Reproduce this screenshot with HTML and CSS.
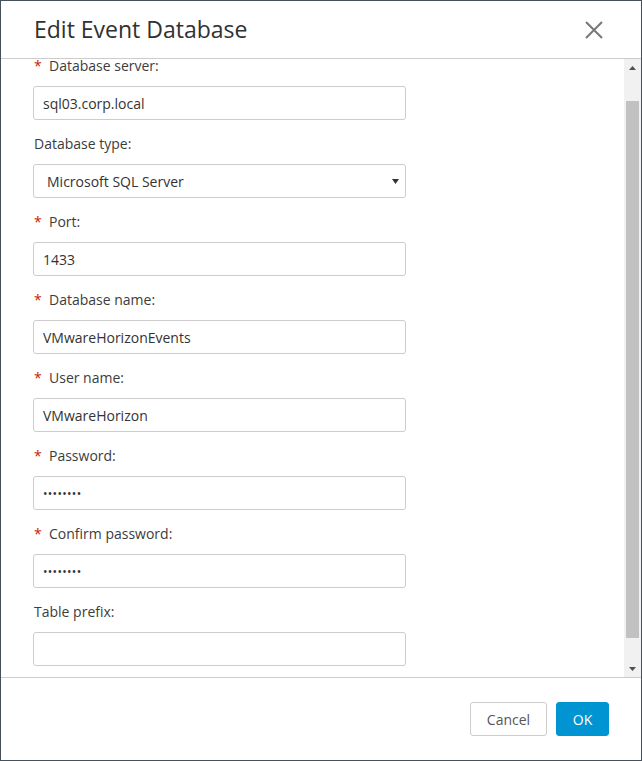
FILE: index.html
```html
<!DOCTYPE html>
<html lang="en">

<head>
  <meta charset="UTF-8">
  <meta name="viewport" content="width=device-width, initial-scale=1.0">
  <title>Edit Event Database</title>
  <link rel="stylesheet" href="styles.css">
</head>

<body>
  <div class="dialog">
    <!-- header -->
    <div class="header">
      <h1 class="title">Edit Event Database</h1>
      <span class="close">
        <svg width="18" height="18" viewBox="0 0 18 18">
          <path d="M1 1 L17 17 M17 1 L1 17" stroke="#777" stroke-width="2" fill="none" />
        </svg>
      </span>
    </div>

    <!-- scrolling body -->
    <div class="body">
      <div class="content">
        <div class="field first">
          <label class="required">Database server:</label>
          <input class="input" type="text" value="sql03.corp.local">
        </div>
        <div class="field">
          <label>Database type:</label>
          <div class="select">
            <span>Microsoft SQL Server</span>
            <svg width="7" height="5" viewBox="0 0 7 5"><path d="M0 0 H7 L3.5 5 Z" fill="#333" /></svg>
          </div>
        </div>
        <div class="field">
          <label class="required">Port:</label>
          <input class="input" type="text" value="1433">
        </div>
        <div class="field">
          <label class="required">Database name:</label>
          <input class="input" type="text" value="VMwareHorizonEvents">
        </div>
        <div class="field">
          <label class="required">User name:</label>
          <input class="input" type="text" value="VMwareHorizon">
        </div>
        <div class="field">
          <label class="required">Password:</label>
          <input class="input pass" type="text" value="••••••••">
        </div>
        <div class="field">
          <label class="required">Confirm password:</label>
          <input class="input pass" type="text" value="••••••••">
        </div>
        <div class="field">
          <label>Table prefix:</label>
          <input class="input" type="text" value="">
        </div>
      </div>
      <div class="scrollbar">
        <div class="arrow up"><svg width="7" height="4" viewBox="0 0 7 4"><path d="M0 4 H7 L3.5 0 Z" fill="#505050" /></svg></div>
        <div class="track"><div class="thumb"></div></div>
        <div class="arrow down"><svg width="7" height="4" viewBox="0 0 7 4"><path d="M0 0 H7 L3.5 4 Z" fill="#505050" /></svg></div>
      </div>
    </div>

    <!-- footer -->
    <div class="footer">
      <button class="btn">Cancel</button>
      <button class="btn primary">OK</button>
    </div>
  </div>
</body>

</html>
```

FILE: styles.css
```css
* {
  margin: 0;
  padding: 0;
  box-sizing: border-box
}

body {
  font-family: "Open Sans", "Liberation Sans", sans-serif;
  color: #333;
  background: #fff;
}

.dialog {
  width: 642px;
  height: 761px;
  border: 1px solid #47515b;
  display: flex;
  flex-direction: column;
  background-color: #fff;
}

.header {
  height: 58px;
  border-bottom: 1px solid #ccc;
  display: flex;
  align-items: center;
  justify-content: space-between;
  padding: 0 38px 0 33px;
}

.title {
  font-size: 23px;
  font-weight: 400;
  color: #313131;
  margin-top: -2px;
}

.close {
  display: flex;
  margin-top: 1px;
}

.body {
  flex: 1;
  display: flex;
  overflow: hidden;
}

.content {
  flex: 1;
  padding-left: 32px;
  overflow: hidden;
}

.field {
  margin-top: 14px;
}

.field.first {
  margin-top: -3px;
}

.field label {
  display: block;
  height: 20px;
  line-height: 20px;
  font-size: 14px;
  color: #3c3c3c;
  padding-left: 1px;
  margin-bottom: 10px;
}

.field label.required {
  position: relative;
  padding-left: 16px;
}

.field label.required::before {
  content: "*";
  position: absolute;
  left: 1px;
  top: 0;
  color: #c92100;
  font-size: 14px;
}

.input,
.select {
  display: block;
  width: 373px;
  height: 34px;
  border: 1px solid #ccc;
  border-radius: 3px;
  font-family: "Open Sans", "Liberation Sans", sans-serif;
  font-size: 14px;
  color: #333;
  padding: 0 9px;
  outline: none;
  background: #fff;
}

.input.pass {
  font-size: 12px;
  letter-spacing: 0.3px;
  padding-left: 9px;
}

.select {
  display: flex;
  align-items: center;
  justify-content: space-between;
  padding: 0 6px 0 13px;
}

.scrollbar {
  width: 17px;
  background-color: #f1f1f1;
  display: flex;
  flex-direction: column;
}

.arrow {
  height: 17px;
  display: flex;
  align-items: center;
  justify-content: center;
}

.track {
  flex: 1;
  padding: 25px 2px 22px 2px;
}

.thumb {
  height: 100%;
  background-color: #c1c1c1;
}

.footer {
  height: 83px;
  border-top: 1px solid #ccc;
  display: flex;
  justify-content: flex-end;
  align-items: flex-start;
  gap: 9px;
  padding: 24px 32px 0 0;
}

.btn {
  height: 34px;
  border-radius: 3px;
  font-family: "Open Sans", "Liberation Sans", sans-serif;
  font-size: 14px;
  cursor: pointer;
}

.btn {
  width: 77px;
  border: 1px solid #ccc;
  background: #fff;
  color: #565656;
}

.btn.primary {
  width: 53px;
  border: 1px solid #0094d2;
  background-color: #0094d2;
  color: #fff;
}
```
